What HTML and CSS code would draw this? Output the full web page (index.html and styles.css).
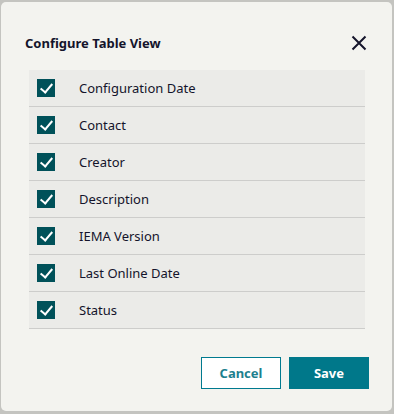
FILE: index.html
```html
<!DOCTYPE html>
<html lang="en">

<head>
    <meta charset="UTF-8">
    <meta name="viewport" content="width=device-width, initial-scale=1.0">
    <title>Configure Table View</title>
    <link rel="stylesheet" href="styles.css">
</head>

<body>
    <div class="dialog">
        <!-- Header -->
        <div class="dialog-header">
            <h2 class="dialog-title">Configure Table View</h2>
            <button class="close-btn" aria-label="Close">
                <svg width="16" height="16" viewBox="0 0 16 16">
                    <path d="M1.5 1.5L14.5 14.5M14.5 1.5L1.5 14.5" stroke="#14142b" stroke-width="2" fill="none"/>
                </svg>
            </button>
        </div>

        <!-- Column list -->
        <ul class="column-list">
            <li class="column-item"><span class="check"></span><span class="label">Configuration Date</span></li>
            <li class="column-item"><span class="check"></span><span class="label">Contact</span></li>
            <li class="column-item"><span class="check"></span><span class="label">Creator</span></li>
            <li class="column-item"><span class="check"></span><span class="label">Description</span></li>
            <li class="column-item"><span class="check"></span><span class="label">IEMA Version</span></li>
            <li class="column-item"><span class="check"></span><span class="label">Last Online Date</span></li>
            <li class="column-item"><span class="check"></span><span class="label">Status</span></li>
        </ul>

        <!-- Footer -->
        <div class="dialog-footer">
            <button class="btn btn-secondary">Cancel</button>
            <button class="btn btn-primary">Save</button>
        </div>
    </div>
</body>

</html>
```

FILE: styles.css
```css
* {
    margin: 0;
    padding: 0;
    box-sizing: border-box;
}

body {
    background-color: #c4c4c0;
    font-family: "Noto Sans", "Open Sans", sans-serif;
    color: #14142b;
    padding: 2px 2px 3px 1px;
    height: 414px;
}

.dialog {
    background-color: #f3f3ef;
    border-radius: 5px;
    height: 409px;
    padding: 0 24px 0 28px;
}

.dialog-header {
    display: flex;
    align-items: center;
    justify-content: space-between;
    padding: 31px 0 0 0;
    margin-left: -4px;
    height: 68px;
    align-items: flex-start;
}

.dialog-title {
    font-size: 13px;
    font-weight: 700;
    line-height: 20px;
}

.close-btn {
    border: none;
    background: none;
    width: 16px;
    height: 16px;
    margin-top: 2px;
    margin-right: 1px;
    cursor: pointer;
}

.column-list {
    list-style: none;
    width: 336px;
}

.column-item {
    display: flex;
    align-items: center;
    height: 37px;
    background-color: #ebebe8;
    border-bottom: 1px solid #cdcdcb;
    padding-left: 8px;
}

.check {
    width: 18px;
    height: 18px;
    background-color: #005159;
    position: relative;
    margin-right: 24px;
}

.check::after {
    content: "";
    position: absolute;
    left: 6px;
    top: 2px;
    width: 5px;
    height: 10px;
    border: solid #ffffff;
    border-width: 0 2px 2px 0;
    transform: rotate(40deg);
}

.label {
    font-size: 13px;
}

.dialog-footer {
    display: flex;
    justify-content: flex-end;
    gap: 8px;
    margin-top: 28px;
    margin-right: -1px;
}

.btn {
    width: 80px;
    height: 32px;
    font-family: "Noto Sans", "Open Sans", sans-serif;
    font-size: 13px;
    font-weight: 700;
    cursor: pointer;
}

.btn-secondary {
    background-color: #ffffff;
    color: #1d7f8e;
    border: 1px solid #007a8f;
}

.btn-primary {
    background-color: #00788a;
    color: #ffffff;
    border: none;
}
```
